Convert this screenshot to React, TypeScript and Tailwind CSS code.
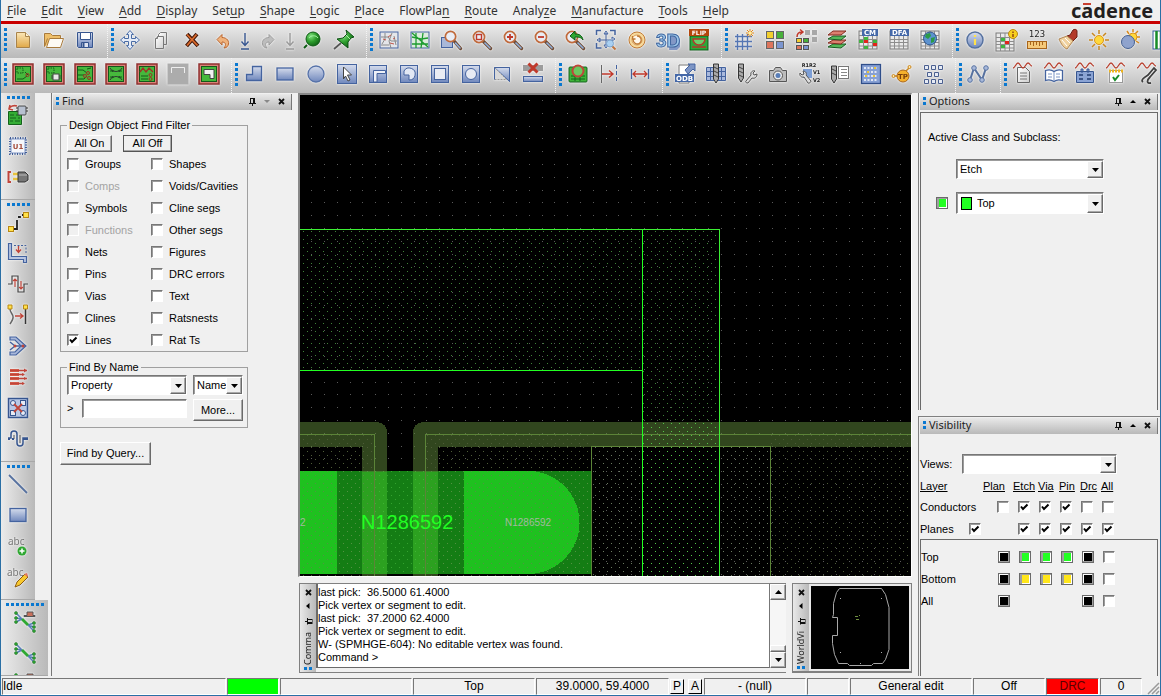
import type { ReactNode } from "react";

const B = "#44639f";
const R = "#b8402f";

/* ---------- shared drawing helpers ---------- */

function Defs() {
  return (
    <svg width="0" height="0" className="absolute" aria-hidden="true">
      <defs>
        <linearGradient id="blue" x1="0" y1="0" x2="0" y2="1">
          <stop offset="0" stopColor="#d5dcec" />
          <stop offset="1" stopColor="#7088bd" />
        </linearGradient>
        <linearGradient id="gold" x1="0" y1="0" x2="0" y2="1">
          <stop offset="0" stopColor="#fbe7b8" />
          <stop offset="1" stopColor="#e0a848" />
        </linearGradient>
        <linearGradient id="paper" x1="0" y1="0" x2="1" y2="1">
          <stop offset="0" stopColor="#ffffff" />
          <stop offset="1" stopColor="#cfcfcf" />
        </linearGradient>
        <radialGradient id="ball" cx="0.35" cy="0.3" r="0.8">
          <stop offset="0" stopColor="#7fe27f" />
          <stop offset="0.5" stopColor="#2c9c2c" />
          <stop offset="1" stopColor="#0b5a12" />
        </radialGradient>
      </defs>
    </svg>
  );
}

function Board({ children }: { children: ReactNode }) {
  return (
    <>
      <rect x="2" y="2" width="20" height="20" fill="#d98277" stroke="#8f2f2f" strokeWidth="1.5" />
      <rect x="4.5" y="4.5" width="15" height="15" fill="#46b83c" stroke="#14581a" />
      <g fill="none" stroke="#145a18" strokeWidth="1">{children}</g>
    </>
  );
}

function Lens({ children }: { children?: ReactNode }) {
  return (
    <>
      <path d="M13.5 13.5l7 7" stroke="#6f4a33" strokeWidth="3.4" strokeLinecap="round" />
      <path d="M15 15l5 5" stroke="#8fb0dc" strokeWidth="1.6" strokeLinecap="round" />
      <circle cx="9" cy="9" r="5.6" fill="#e9edf5" stroke="#c06a3c" strokeWidth="1.7" />
      {children}
    </>
  );
}

function Sheet({ children }: { children?: ReactNode }) {
  return (
    <>
      <rect x="3" y="3" width="18" height="18" fill="#e9e9e9" stroke="#777" />
      <path d="M3 7.500h18M3 11.500h18M3 14.500h18M3 18h18M7.500 3v18M12 3v18M16.500 3v18" stroke="#8c8c8c" fill="none" />
      {children}
    </>
  );
}

const wave = <path d="M2 6c2 0 3-5 5-5s3 5 5 5 3-5 5-5 2 3 4 3" fill="none" stroke={R} strokeWidth="1.3" />;

const ratDots = (
  <g fill="#2fa832" stroke="#14611c" strokeWidth="0.500">
    <circle cx="3" cy="3" r="1.500" /><circle cx="3" cy="8" r="1.500" /><circle cx="3" cy="12" r="1.500" />
    <circle cx="21" cy="13" r="1.500" /><circle cx="21" cy="17" r="1.500" /><circle cx="21" cy="21" r="1.500" />
  </g>
);
const ratLines = (
  <>
    <path d="M3 3l6 6 6 6 6 6M3 8l6 1M3 12l6-3M21 13l-6 2M21 17l-6-2" stroke="#5a7fb8" fill="none" strokeWidth="1.500" />
    <path d="M9 9l6 6" stroke="#2fa832" strokeWidth="2.800" />
  </>
);
const ratHat = <path d="M11 6.500h11v-1h-2V2h-6v3.500h-3z" fill="#c8705c" stroke="#555" />;

const art: Record<string, ReactNode> = {
  "New": (
    <g stroke="#a8834a">
      <path d="M5.500 4.500h9l4 4v11h-13z" fill="url(#gold)" />
      <path d="M14.500 4.500v4h4" fill="#fff3d2" />
    </g>
  ),
  "Open": (
    <g stroke="#a87a3c">
      <path d="M2.500 18.500v-13h6l2 2h8v3" fill="#eebf6a" />
      <path d="M4.500 19.500l3-9h14l-3 9z" fill="#fdfaf3" />
      <path d="M2.500 18.500l3-8" />
    </g>
  ),
  "Save": (
    <g stroke="#36558f">
      <path d="M4.500 4.500h15v15h-14l-1-1z" fill="url(#blue)" />
      <path d="M7.500 4.500h10v7h-10z" fill="#fff" />
      <path d="M8.500 14.500h7v5h-7z" fill="#dfe5f2" />
      <path d="M10.500 15v4" strokeWidth="2" />
    </g>
  ),
  "Move": (
    <path
      d="M12 2.500l3.500 4h-2v4h4v-2l4 3.500-4 3.500v-2h-4v4h2l-3.500 4-3.500-4h2v-4h-4v2l-4-3.500 4-3.500v2h4v-4h-2z"
      fill="#e4ebf7"
      stroke="#4a6ca5"
    />
  ),
  "Copy": (
    <g stroke="#777" fill="url(#paper)">
      <path d="M11.500 4.500h6v12h-8v-10z" />
      <path d="M8.500 8.500h6v12h-8v-10z" />
      <path d="M8.500 8.500v2h-2" />
    </g>
  ),
  "Delete": (
    <>
      <path d="M7 6l11 12M17 6L6.500 18" stroke="#451b0d" strokeWidth="4" />
      <path d="M7 6.500l10.500 11M16.500 6.500L7 17.500" stroke="#dc6a2b" strokeWidth="1.800" />
    </>
  ),
  "Undo": (
    <path d="M6 11.500l5-5v3c5 0 8 4 6 8-1 2-3 2.500-4 2.500 3-4 1-6-2-6v3z" fill="#efb27c" stroke="#b9652f" />
  ),
  "Undo list": (
    <path d="M12 5v12M8.500 13.500l3.500 4 3.500-4M8 21h8" fill="none" stroke="#36558f" strokeWidth="1.400" />
  ),
  "Redo": (
    <path d="M18 11.500l-5-5v3c-5 0-8 4-6 8 1 2 3 2.500 4 2.500-3-4-1-6 2-6v3z" fill="#bdbdbd" stroke="#9c9c9c" />
  ),
  "Redo list": (
    <path d="M12 5v12M8.500 13.500l3.500 4 3.500-4M8 21h8" fill="none" stroke="#999" strokeWidth="1.400" />
  ),
  "Refresh": (
    <>
      <path d="M6 17l-3 3" stroke="#0d5a14" strokeWidth="2" />
      <circle cx="12" cy="11" r="7" fill="url(#ball)" stroke="#0d5a14" />
      <path d="M8 10c2-3 7-3 9 0" fill="none" stroke="#9ff09f" />
    </>
  ),
  "Pin": (
    <g stroke="#0d4f14">
      <path d="M9 15l-7 6" stroke="#555" strokeWidth="1.800" />
      <path d="M14 2l8 7-3 1-3 4 0 6-11-9 6-1 4-4z" fill="url(#ball)" />
      <path d="M14 7l4 4" stroke="#a6f0a0" />
    </g>
  ),
  "Unrats all": (
    <>
      <rect x="3" y="4" width="18" height="16" fill="#e4e6ea" stroke={B} />
      <path d="M4 9h7l3 4h6M8 5v6l-3 5M15 5l-3 8 2 7M4 17h8M17 8l2 9" stroke="#8a8a8a" fill="none" />
      <path d="M6 11l3 1M11 9l3-2M13 15l4 1M16 11l2-1" stroke="#c0564a" />
    </>
  ),
  "Rats all": (
    <>
      <rect x="3" y="4" width="18" height="16" fill="#dcebdc" stroke={B} />
      <path d="M4 9l9 2 7-1M8 5v15M15 5l-2 15M4 16h16M4 5l16 14" stroke="#1d9c2f" strokeWidth="1.300" fill="none" />
    </>
  ),
  "Zoom by points": (
    <>
      <rect x="2.500" y="9.500" width="11" height="10" fill="#a9b8d8" stroke={B} />
      <path d="M15.500 13.500l6 7" stroke="#6f4a33" strokeWidth="3.400" strokeLinecap="round" />
      <path d="M16.500 15l4.500 5" stroke="#8fb0dc" strokeWidth="1.600" strokeLinecap="round" />
      <circle cx="11.500" cy="8.500" r="5.200" fill="#e9edf5" stroke="#c06a3c" strokeWidth="1.700" />
    </>
  ),
  "Zoom fit": (
    <Lens>
      <rect x="6.500" y="6.500" width="5" height="5" fill="none" stroke="#c0392b" strokeWidth="1.400" />
    </Lens>
  ),
  "Zoom in": (
    <Lens>
      <path d="M9 6v6M6 9h6" stroke="#c0392b" strokeWidth="1.800" />
    </Lens>
  ),
  "Zoom out": (
    <Lens>
      <path d="M6 9h6" stroke="#c0392b" strokeWidth="1.800" />
    </Lens>
  ),
  "Zoom previous": (
    <Lens>
      <path d="M7 8l5-5v3c4 0 7 1 8 6-2-3-5-3-8-3v3z" fill="#2fa832" stroke="#0d5a14" />
    </Lens>
  ),
  "Zoom selection": (
    <>
      <path d="M2.500 7v-4.500h4.500M16 2.500h5v4.500M2.500 15v5h5" fill="none" stroke={B} strokeWidth="1.500" />
      <path d="M12 3l2 3h-4zM3 12l3-2v4zM12 20l2-3h-4zM21 11l-3-2v4zM12 5v12M5 12h12" fill="#dfe6f4" stroke={B} />
      <path d="M18 18l3.500 3.500" stroke="#c0733c" strokeWidth="2" />
      <circle cx="16" cy="15.500" r="3.500" fill="#a9d0f2" stroke="#7da4cc" />
    </>
  ),
  "Redraw": (
    <>
      <circle cx="12" cy="12" r="8" fill="#f6d99c" stroke="#c07a35" />
      <circle cx="12" cy="12" r="5" fill="#fff8ec" stroke="#d9a05a" />
      <path d="M12 8a4 4 0 1 1-3.500 2.500M7.500 8v3h3" fill="none" stroke="#c07a35" strokeWidth="1.300" />
    </>
  ),
  "3D view": (
    <>
      <path d="M14 6h6l4 5v8l-3 3h-8z" fill="#8398c6" />
      <text x="0" y="19" fontSize="19" fontFamily="Liberation Sans, sans-serif" fontWeight="700" fill="#9dc6ea" stroke="#41679f" strokeWidth="1">3D</text>
    </>
  ),
  "Flip design": (
    <>
      <rect x="3" y="8" width="18" height="14" fill="#2da83a" stroke="#0e5a19" />
      <path d="M6 11a6 6 0 0 0 12 0zM5 19h14" fill="#6ccf6c" stroke="#b3392c" strokeWidth="1.500" />
      <rect x="2" y="1" width="20" height="7" fill="#b4460b" />
      <text x="12" y="7" fontSize="6" fontFamily="DejaVu Sans, sans-serif" fontWeight="700" fill="#fff" textAnchor="middle">FLIP</text>
    </>
  ),
  "Grid toggle": (
    <>
      <path d="M3 8.500h17M3 13.500h17M3 18.500h17M5.500 6v16M10.500 6v16M15.500 6v16" stroke="#5576b3" strokeWidth="1.400" />
      <path d="M18 1v8M14 5h8M15 2l6 6M21 2l-6 6" stroke="#e08a1a" />
      <circle cx="18" cy="5" r="1.500" fill="#fff3a0" />
    </>
  ),
  "Color": (
    <g stroke="#666">
      <rect x="3.500" y="3.500" width="7" height="7" fill="#f3cf2e" />
      <rect x="13.500" y="3.500" width="7" height="7" fill="#48b03a" />
      <rect x="3.500" y="13.500" width="7" height="7" fill="#dd755c" />
      <rect x="13.500" y="13.500" width="7" height="7" fill="#7b95cf" />
    </g>
  ),
  "Shadow toggle": (
    <>
      <path d="M11 2h5v5h-5zM18 2h5v5h-5zM18 9h5v5h-5z" fill="#a8a8a8" />
      <path d="M3 9c0-4 2-5 5-5M6 1.500l3 2.500-3 2.500" fill="none" stroke="#c0392b" strokeWidth="1.500" />
      <g stroke="#555">
        <rect x="2.500" y="10.500" width="5" height="4" fill="#f3cf2e" />
        <rect x="9.500" y="10.500" width="5" height="4" fill="#48b03a" />
        <rect x="2.500" y="17.500" width="5" height="4" fill="#dd755c" />
        <rect x="9.500" y="17.500" width="5" height="4" fill="#7b95cf" />
      </g>
    </>
  ),
  "Cross section": (
    <g strokeWidth="1">
      <path d="M3 19l5-3h13l-5 4z" fill="#56b85a" stroke="#195c22" />
      <path d="M3 15l5-3h13l-5 4z" fill="#dd8070" stroke="#832a20" />
      <path d="M3 11l5-3h13l-5 4z" fill="#56b85a" stroke="#195c22" />
      <path d="M3 7l5-4h13l-5 4z" fill="#dd8070" stroke="#832a20" />
    </g>
  ),
  "Constraint manager": (
    <Sheet>
      <path d="M8 9h4v3H8zM3 12h4v3H3zM8 18h4v3H8zM17 12h4v3h-4z" fill="#3fb43f" />
      <path d="M8 12h4v3H8zM17 15h4v3h-4z" fill="#e2231a" />
      <rect x="6" y="1" width="16" height="7" fill="#4468a8" />
      <text x="14" y="7" fontSize="7" fontFamily="DejaVu Sans, sans-serif" fontWeight="700" fill="#fff" textAnchor="middle">CM</text>
    </Sheet>
  ),
  "DFA table": (
    <Sheet>
      <rect x="3" y="1" width="19" height="7" fill="#4468a8" />
      <text x="12.500" y="7" fontSize="7" fontFamily="DejaVu Sans, sans-serif" fontWeight="700" fill="#fff" textAnchor="middle">DFA</text>
    </Sheet>
  ),
  "Global settings": (
    <Sheet>
      <circle cx="12" cy="10.500" r="6.500" fill="#5c92cf" stroke="#2c5288" />
      <path d="M8 6l4-1 1 3-3 3-3-2zM13 10l4-1-1 5-3 1z" fill="#2b9a47" />
    </Sheet>
  ),
  "Information": (
    <>
      <circle cx="12" cy="12" r="8" fill="url(#blue)" stroke="#56719f" strokeWidth="1.500" />
      <path d="M12 7v2M12 11v6" stroke="#ffe14a" strokeWidth="2.200" />
    </>
  ),
  "Design report": (
    <>
      <g transform="translate(-1 2)"><Sheet /></g>
      <path d="M7 10h4v3H7zM7 17h4v3H7z" fill="#3fb43f" />
      <path d="M11 13h4v3h-4z" fill="#e2231a" />
      <circle cx="19" cy="6" r="4.500" fill="#f8cf1d" stroke="#b88713" />
      <path d="M19 3.500v1.500M19 6v3" stroke="#8a3d10" strokeWidth="1.400" />
    </>
  ),
  "Measure": (
    <>
      <text x="12" y="9" fontSize="9" fontFamily="DejaVu Sans Mono, monospace" fill="#222" textAnchor="middle">123</text>
      <rect x="2.500" y="13.500" width="19" height="7" fill="#f5c97a" stroke="#a8641a" />
      <path d="M5.500 14v3M8.500 14v4M11.500 14v3M14.500 14v4M17.500 14v3" stroke="#a8641a" />
    </>
  ),
  "Paint": (
    <>
      <path d="M11 8l3-1 3-5c1-1 4-1 4 1v6l-4 4z" fill="#b33a2a" stroke="#6d1f14" />
      <path d="M3 11l8-3 6 5-6 8c-3-1-6-5-8-10z" fill="#f0d2a0" stroke="#b08450" />
      <path d="M6 12l5 6M9 10l5 5" stroke="#fff" />
    </>
  ),
  "Highlight": (
    <>
      <path d="M12 2v4M12 18v4M2 12h4M18 12h4M5 5l3 3M16 16l3 3M19 5l-3 3M8 16l-3 3" stroke="#c88720" strokeWidth="1.500" />
      <circle cx="12" cy="12" r="4.500" fill="#ffd83a" stroke="#d9931c" />
    </>
  ),
  "Dehighlight": (
    <>
      <path d="M15 1v3M22 9h-3M20 3l-3 3M9 3l2 3M21 15l-3-2" stroke="#d98a1c" strokeWidth="1.500" />
      <circle cx="15" cy="9" r="4" fill="#ffd83a" stroke="#d9931c" />
      <circle cx="10" cy="14" r="6.500" fill="#8fa3cd" stroke="#46608f" />
    </>
  ),
  "Waive DRC": (
    <>
      <rect x="4" y="3" width="18" height="18" fill="#fff" stroke="#345d96" />
      <path d="M7.500 3v18M12 3v18M17 3v18" stroke="#178c28" strokeWidth="2.500" />
    </>
  ),

  "General edit": <Board><rect x="6" y="6" width="6" height="5" strokeDasharray="1.500 1" /><path d="M6 17h6l4-3M14 10l3 3" /><circle cx="16.500" cy="13" r="1.500" stroke="#a02f24" /></Board>,
  "Placement edit": <Board><rect x="6" y="6" width="6" height="5" strokeDasharray="1.500 1" /><rect x="11" y="12" width="6" height="6" fill="#e8e8e8" stroke="#444" /><path d="M9 14h2M9 16h2M17 14h2M17 16h2" stroke="#444" /></Board>,
  "Etch edit": <Board><path d="M5 8h5l4 3M5 17h6l3-3M14 7l4-1M5 13h6" /><circle cx="15" cy="11" r="1.500" stroke="#a02f24" /><circle cx="12" cy="14" r="1.500" stroke="#a02f24" /><circle cx="16" cy="16" r="1.500" stroke="#a02f24" /></Board>,
  "Flow planning": <Board><path d="M8 8c3 2 5 2 8 0M8 16c3-2 5-2 8 0M6 6l3 4M18 6l-3 4M6 18l3-4M18 18l-3-4" stroke="#333" /><path d="M6 9h4M14 9h4M6 15h4M14 15h4" /></Board>,
  "Signal integrity": <Board><path d="M5 10l3-4 3 4 3-4 4 4" stroke="#a02f24" strokeWidth="1.300" /><path d="M6 14h7M6 17h7" /><circle cx="15.500" cy="13" r="1.500" stroke="#a02f24" /><circle cx="15.500" cy="17" r="1.500" stroke="#a02f24" /></Board>,
  "IFP edit": (
    <>
      <rect x="1.500" y="1.500" width="21" height="21" fill="#acacac" />
      <path d="M5.500 11V5.500h13v5.500" fill="none" stroke="#eee" />
    </>
  ),
  "Shape edit": <Board><path d="M7 7.500h10v9h-4v-4H7z" fill="#f2f2f2" stroke="#444" /></Board>,

  "Shape polygon": <path d="M4.500 18.500v-6h6v-8h9v14z" fill="url(#blue)" stroke={B} strokeWidth="1.300" />,
  "Shape rectangle": <rect x="4" y="6" width="16" height="12" fill="url(#blue)" stroke={B} strokeWidth="1.300" />,
  "Shape circle": <circle cx="12" cy="12" r="8" fill="url(#blue)" stroke="#5672a8" strokeWidth="1.300" />,
  "Select shape": <><rect x="2.500" y="2.500" width="19" height="19" fill="url(#blue)" stroke={B} /><path d="M8.500 5l8 8h-4l2.500 5-2 1-2.500-5-2 3z" fill="#fff" stroke="#444" /></>,
  "Void polygon": <><rect x="3.500" y="3.500" width="17" height="17" fill="url(#blue)" stroke={B} /><path d="M7.500 20v-11.500h12v3h-8.500v8.500z" fill="#eef1f8" stroke={B} /></>,
  "Void arc": <><rect x="3.500" y="3.500" width="17" height="17" fill="url(#blue)" stroke={B} /><path d="M7 9a6 6 0 1 1 5 9v-5H7z" fill="#e2e8f4" stroke={B} /></>,
  "Void rectangle": <><rect x="3.500" y="3.500" width="17" height="17" fill="url(#blue)" stroke={B} /><rect x="6.500" y="6.500" width="11" height="11" fill="#e8ebf3" stroke={B} /></>,
  "Void circle": <><rect x="3.500" y="3.500" width="17" height="17" fill="url(#blue)" stroke={B} /><circle cx="12" cy="12" r="5.500" fill="#e8ebf3" stroke={B} /></>,
  "Island delete": <><path d="M4.500 5.500h15v14z" fill="url(#blue)" stroke={B} /><path d="M4.500 5.500v12h12z" fill="#d8d8d8" stroke="#999" strokeDasharray="2 1" /><path d="M4.500 17.500v-12h15v14" fill="none" stroke={B} /></>,
  "Delete unconnected": <><rect x="2" y="3" width="20" height="6" fill="#9c9c9c" /><path d="M7.500 1.500l9 9M16.500 1.500l-9 9" stroke="#c0392b" strokeWidth="3" /><rect x="2.500" y="14.500" width="19" height="5" fill="url(#blue)" stroke={B} /></>,

  "Update DRC": <><rect x="3" y="5" width="18" height="15" rx="1" fill="#3fb53a" stroke="#14611c" /><path d="M5 17h14M5 14h14M9 14v5M14 14v5" stroke="#14611c" /><circle cx="12" cy="9" r="5.500" fill="#6cc860" stroke="#c0453a" strokeWidth="2" /></>,
  "Dimension linear": <g fill="none"><path d="M4.500 3v18" stroke="#666" /><path d="M19.500 3v18" stroke={B} strokeDasharray="4 2" /><path d="M5 12h11M12 8.500l4 3.500-4 3.500" stroke="#c0392b" strokeWidth="1.400" /></g>,
  "Dimension datum": <g fill="none"><path d="M3.500 7v10M20.500 7v10" stroke={B} strokeWidth="1.300" /><path d="M5 12h14M8 9l-3 3 3 3M16 9l3 3-3 3" stroke="#c0392b" strokeWidth="1.300" /></g>,

  "ODB export": <><path d="M6 3h10v18H6z" fill="#fff" stroke="#777" /><path d="M12 8l5-5-2-1h7v7l-2-2-5 5z" fill="#7d95c5" stroke={B} /><rect x="2" y="12" width="19" height="8" fill="#4468a8" /><text x="11.500" y="19" fontSize="7" fontFamily="DejaVu Sans, sans-serif" fontWeight="700" fill="#fff" textAnchor="middle">ODB</text></>,
  "NC drill": <><path d="M2.500 5.500h19v13h-19zM2 9.500h20M2 14.500h20M6.500 6v12M17.500 6v12" fill="#a9b9dc" stroke={B} /><path d="M9.500 2h5v15l-2.500 4-2.500-4z" fill="#aaa" stroke="#333" /><path d="M10 5l4 2M10 9l4 2M10 13l4 2" stroke="#444" /></>,
  "NC parameters": <><path d="M3.500 2h5v14l-2.500 4-2.500-4z" fill="#aaa" stroke="#333" /><path d="M4 5l4 2M4 9l4 2M4 13l4 2" stroke="#444" /><path d="M11 19l5-6c-1-3 2-5 4-4l-2 2 1 2 3-1c0 3-2 5-5 4l-4 5c-2 0-3-1-2-2z" fill="#ddd" stroke="#555" /></>,
  "Artwork": <><path d="M3.500 8.500h4l2-3h5l2 3h4v11h-17z" fill="#bcbcbc" stroke="#555" /><circle cx="12" cy="13.500" r="4.500" fill="#eee" stroke="#555" /><circle cx="12" cy="13.500" r="2.500" fill="#5a7fb8" /></>,
  "Backannotate": <><rect x="6" y="7" width="9" height="9" fill="#7d9fd6" /><text x="12" y="5" fontSize="5" fontFamily="DejaVu Sans, sans-serif" fontWeight="700" fill="#222" textAnchor="middle">R1R2</text><text x="16" y="12" fontSize="5" fontFamily="DejaVu Sans, sans-serif" fontWeight="700" fill="#222">V1</text><text x="16" y="20" fontSize="5" fontFamily="DejaVu Sans, sans-serif" fontWeight="700" fill="#222">V2</text><path d="M11 21l-4-6c-3 1-5-2-4-4l2 2 2-1-1-3c3 0 4 3 3 4l5 6c0 1-2 3-3 2z" fill="#ddd" stroke="#555" /></>,
  "Drill legend": <><path d="M3.500 4h5v13l-2.500 4-2.500-4z" fill="#aaa" stroke="#333" /><path d="M4 7l4 2M4 11l4 2" stroke="#444" /><rect x="10.500" y="4.500" width="10" height="12" fill="#fff" stroke="#777" /><path d="M13 7.500h6M13 10.500h6M13 13.500h6" stroke="#888" /></>,
  "Silkscreen": <><rect x="2.500" y="2.500" width="19" height="19" fill="#86a0d4" stroke="#2f4e8a" strokeWidth="1.300" /><path d="M5 6h14M5 10h14M5 14h14M5 18h14" stroke="#dfe6f4" strokeWidth="2" strokeDasharray="2 1.500" /><path d="M8 10h2M14 14h2M6 14h2M15 6h2" stroke="#e8c33c" strokeWidth="2" /></>,
  "Testprep": <><path d="M3 14h7M15 10l4-4" stroke="#c8851c" strokeWidth="1.500" /><circle cx="3.500" cy="14" r="1.500" fill="#ffe9b0" stroke="#c8851c" /><circle cx="19.500" cy="5" r="1.500" fill="#ffe9b0" stroke="#c8851c" /><circle cx="13" cy="14" r="6" fill="#f5b02c" stroke="#a8641a" /><text x="13" y="17" fontSize="7" fontFamily="DejaVu Sans, sans-serif" fontWeight="700" fill="#7a3d0a" textAnchor="middle">TP</text></>,
  "Thieving": <g fill="#e6ebf5" stroke="#4a5f8f"><path d="M3.500 3.500h4v4h-4zM10.500 3.500h4v4h-4zM17.500 3.500h4v4h-4zM6.500 10.500h4v4h-4zM13.500 10.500h4v4h-4zM3.500 17.500h4v4h-4zM10.500 17.500h4v4h-4zM17.500 17.500h4v4h-4z" /></g>,
  "Probe": <g stroke="#56719f" fill="#a8b8da"><path d="M4 18L8 6l8 12 4-12" fill="none" strokeWidth="2" /><circle cx="4" cy="18" r="2.300" /><circle cx="8" cy="6" r="2.300" /><circle cx="16" cy="18" r="2.300" /><circle cx="20" cy="6" r="2.300" /></g>,
  "Signal report": <><path d="M6.500 5.500h8l4 4v11h-12z" fill="url(#paper)" stroke="#666" /><path d="M9 11h7M9 14h7M9 17h7" stroke="#777" />{wave}</>,
  "Signal library": <><path d="M3.500 8.500c3-1 6-1 8.500 1 3-2 6-2 8.500-1v10c-3-1-6-1-8.500 1-3-2-6-2-8.500-1z" fill="#fff" stroke={B} strokeWidth="1.300" /><path d="M12 10v9M6 12h4M6 15h4M14 12h4M14 15h4" stroke="#7d95c5" />{wave}</>,
  "Signal model": <><path d="M3.500 9.500h17v11h-17zM8 7h2v3H8zM14 7h2v3h-2z" fill="#8aa3d4" stroke="#36558f" /><path d="M6 13h4M14 13h4M6 17h4M14 17h4" stroke="#223d70" strokeWidth="1.500" />{wave}</>,
  "Signal audit": <><rect x="5.500" y="8.500" width="13" height="12" fill="#fff" stroke="#999" /><path d="M5 9h14" stroke="#f0b51c" strokeWidth="3" strokeDasharray="2 1" /><path d="M9 15l2 3 4-5" fill="none" stroke="#178c28" strokeWidth="2" />{wave}</>,
  "Signal probe": <>{wave}<path d="M8 20c-3-2 2-5 5-7l6-7 2 2-6 7c-3 3-4 7 1 6" fill="none" stroke="#3f3f3f" strokeWidth="1.800" /></>,

  "Place manual": <><path d="M3 6c1-3 5-4 8-3M4 2l-1 4 4 1" fill="none" stroke="#c0453a" strokeWidth="1.600" /><path d="M2.500 8.500h13v13h-13z" fill="#35ad35" stroke="#14611c" /><path d="M4 12h4M10 12h4M4 15h6M12 15h2M4 18h3M9 18h5" stroke="#14611c" /><rect x="12" y="3" width="8" height="9" rx="1" fill="#b7c0cf" stroke="#444" /><path d="M10 5h2M10 8h2M20 5h2M20 8h2" stroke="#333" /></>,
  "Place component": <><rect x="5" y="5" width="14" height="14" fill="#f5f7fb" stroke="#7f95c5" /><path d="M4 4h16v16H4z" fill="none" stroke="#3e5c97" strokeWidth="2" strokeDasharray="1 1.500" /><text x="12" y="15" fontSize="7" fontFamily="DejaVu Sans, sans-serif" fontWeight="700" fill="#a54f3f" textAnchor="middle">U1</text></>,
  "Swap components": <><path d="M5 7H2.500v10H5" stroke="#c0453a" strokeWidth="2" fill="none" /><path d="M7 9h6M7 14h6" stroke="#e8c33c" strokeWidth="2.500" /><path d="M12 7h7l3 3v5l-3 2h-7z" fill="#777" stroke="#333" /><path d="M13 10h8" stroke="#bbb" /></>,
  "Add connect": <><path d="M7 19h4v-9M12 7h2v-1M16 5h2" fill="none" stroke="#222" strokeWidth="1.800" /><rect x="2.500" y="16.500" width="5" height="5" fill="#ffe14a" stroke="#b88713" /><rect x="17.500" y="2.500" width="5" height="5" fill="#ffe14a" stroke="#b88713" /></>,
  "Slide": <><path d="M2.500 2.500h3v13h15v6h-3v-3h-15z" fill="#b9c6e2" stroke={B} strokeWidth="1.200" /><path d="M8 4.500h12v9" fill="none" stroke={B} strokeDasharray="2 1.500" /><path d="M12.500 5v6M10 8.500l2.500 3 2.500-3" stroke="#c0453a" fill="none" strokeWidth="1.400" /></>,
  "Delay tune": <><path d="M2 12h4V4h6v16h6v-8h4" fill="none" stroke="#444" strokeWidth="1.200" /><path d="M9 15V7M7 9l2-2 2 2M15 9v8M13 15l2 2 2-2" fill="none" stroke="#c0453a" strokeWidth="1.200" /></>,
  "Custom smooth": <><path d="M4 6c0 6 7 5 0 15" fill="none" stroke="#666" strokeWidth="1.500" /><path d="M19.500 6v15" stroke="#333" strokeWidth="1.500" /><path d="M9 13h8M14 10.500l3 2.500-3 2.500" fill="none" stroke="#c0453a" strokeWidth="1.400" /><path d="M2 2h4v4H2zM17.500 2h4v4h-4z" fill="#ffe14a" stroke="#b88713" /></>,
  "Create fanout": <><path d="M4 3h6l10 9-10 9H4v-3h5l6-6-6-6H4z" fill="#a9b8da" stroke={B} strokeWidth="1.200" /><path d="M4 8l5 4M4 16l5-4M8 12h11" stroke={B} strokeWidth="1.500" /><circle cx="9" cy="12" r="1.500" fill="#c0453a" /><circle cx="17" cy="12" r="1.500" fill="#c0453a" /></>,
  "Auto route": <><path d="M4 4h9v3H4zM4 8h9v3H4zM4 12h9v3H4zM4 17h9v3H4z" fill="#d8604e" /><path d="M4 5.500h17M4 9.500h14M4 13.500h17M4 18.500h14" stroke="#c0453a" strokeWidth="1.300" /><path d="M18 3.500l3 2-3 2zM16 8l3 1.500-3 1.500zM18 12l3 1.500-3 1.500zM16 17l3 1.500-3 1.500z" fill="#c0453a" /></>,
  "Spread": <><rect x="2.500" y="2.500" width="19" height="19" fill="#b9c8e6" stroke="#36558f" strokeWidth="1.500" /><g fill="#e6ebf6" stroke="#36558f"><circle cx="7" cy="7" r="2.500" /><rect x="14.500" y="4.500" width="5" height="5" /><rect x="4.500" y="14.500" width="5" height="5" /><circle cx="17" cy="17" r="2.500" /></g><path d="M8 8l8 8M16 8l-8 8" stroke="#c0453a" strokeWidth="1.800" /></>,
  "Phase tune": <><path d="M2 11h3V7c0-4 6-4 6 0v9c0 4 6 4 6 0v-5h5" fill="none" stroke="#36558f" strokeWidth="1.500" /><path d="M8 12V8M14 8v8" fill="none" stroke="#555" /><path d="M2 12h2M6 12h2M17 12h5" stroke="#36558f" strokeWidth="2" /></>,
  "Add line": <path d="M3 3l18 18" stroke="#56719f" strokeWidth="1.800" />,
  "Add rectangle": <rect x="4" y="5.500" width="16" height="13" fill="url(#blue)" stroke={B} strokeWidth="1.300" />,
  "Add text": <><text x="2" y="11" fontSize="10" fontFamily="Noto Sans, sans-serif" fill="#777">abc</text><circle cx="16" cy="17" r="4.500" fill="#2fa832" /><path d="M16 14.500v5M13.500 17h5" stroke="#fff" strokeWidth="1.500" /></>,
  "Edit text": <><text x="1" y="11" fontSize="10" fontFamily="Noto Sans, sans-serif" fill="#777">abc</text><path d="M9 22l2-5 8-8 3 3-8 8z" fill="#f8c92e" stroke="#8a5a14" /><path d="M18 9l3-1 1 3-1 1z" fill="#dd755c" /></>,
  "Rat bundle": <>{ratLines}{ratDots}{ratHat}</>,
  "Rat split": <>{ratLines}{ratDots}</>,
  "Rat merge": <>{ratLines}{ratDots}{ratHat}</>,
};

const rowOne = [
  ["New", "Open", "Save"],
  ["Move", "Copy", "Delete", "Undo", "Undo list", "Redo", "Redo list", "Refresh", "Pin"],
  ["Unrats all", "Rats all", "Zoom by points", "Zoom fit", "Zoom in", "Zoom out", "Zoom previous", "Zoom selection", "Redraw", "3D view", "Flip design"],
  ["Grid toggle", "Color", "Shadow toggle", "Cross section", "Constraint manager", "DFA table", "Global settings"],
  ["Information", "Design report", "Measure", "Paint", "Highlight", "Dehighlight", "Waive DRC"],
];
const rowTwo = [
  ["General edit", "Placement edit", "Etch edit", "Flow planning", "Signal integrity", "IFP edit", "Shape edit"],
  ["Shape polygon", "Shape rectangle", "Shape circle", "Select shape", "Void polygon", "Void arc", "Void rectangle", "Void circle", "Island delete", "Delete unconnected"],
  ["Update DRC", "Dimension linear", "Dimension datum"],
  ["ODB export", "NC drill", "NC parameters", "Artwork", "Backannotate", "Drill legend", "Silkscreen", "Testprep", "Thieving"],
  ["Probe"],
  ["Signal report", "Signal library", "Signal model", "Signal audit", "Signal probe"],
];
const side = [
  ["Place manual", "Place component", "Swap components"],
  ["Add connect", "Slide", "Delay tune", "Custom smooth", "Create fanout", "Auto route", "Spread", "Phase tune"],
  ["Add line", "Add rectangle", "Add text", "Edit text"],
];

function Tool({ name }: { name: string }) {
  const narrow = name.endsWith(" list");
  return (
    <button type="button" aria-label={name} className={`flex h-[31px] shrink-0 items-center justify-center ${narrow ? "w-[14px]" : "w-[31px]"}`}>
      <svg width="24" height="24" viewBox="0 0 24 24" className="shrink-0 overflow-visible drop-shadow-[0_0_1px_#ffffff]" aria-hidden="true">
        {art[name]}
      </svg>
    </button>
  );
}

function Toolbar({ groups, height }: { groups: string[][]; height: string }) {
  return (
    <div role="toolbar" className={`-ml-px flex shrink-0 overflow-hidden bg-linear-to-b from-[#ebebeb] to-[#b9b9b9] pl-px ${height}`}>
      {groups.map((g) => (
        <div key={g[0]} className="flex shrink-0 items-center border-r border-dotted border-[#f4f4f4] pr-[7px] pb-[3px] pl-[3px] last:border-r-0">
          <span className="h-[23px] w-[3px] bg-[repeating-linear-gradient(to_bottom,#0a78d0_0_3px,transparent_3px_5px)]" />
          {g.map((n) => <Tool key={n} name={n} />)}
        </div>
      ))}
    </div>
  );
}

function SideGroup({ names, wide }: { names: string[]; wide?: boolean }) {
  return (
    <div
      role="toolbar"
      className={`flex flex-col items-center border-b border-[#a8a8a8] bg-linear-to-r from-[#ebebeb] to-[#b9b9b9] pt-[3px] ${wide ? "min-h-0 w-[47px] flex-1 overflow-hidden" : "w-[34px] shrink-0 pb-[7px]"}`}
    >
      <span className={`h-[3px] shrink-0 bg-[repeating-linear-gradient(to_right,#0a78d0_0_3px,transparent_3px_5px)] ${wide ? "w-[38px]" : "w-[23px]"}`} />
      {names.map((n) => <Tool key={n} name={n} />)}
    </div>
  );
}

/* ---------- menu bar ---------- */

const menus: [string, string, string][] = [
  ["", "F", "ile"], ["", "E", "dit"], ["", "V", "iew"], ["", "A", "dd"], ["", "D", "isplay"],
  ["Set", "u", "p"], ["", "S", "hape"], ["", "L", "ogic"], ["", "P", "lace"], ["FlowPla", "n", ""],
  ["", "R", "oute"], ["Analy", "z", "e"], ["", "M", "anufacture"], ["", "T", "ools"], ["", "H", "elp"],
];

function MenuBar() {
  return (
    <header className="flex h-6 shrink-0 items-center justify-between border-b-3 border-[#c80000] pr-[6px] pl-[6px]">
      <nav className="flex gap-[15px] font-['Noto_Sans',sans-serif] text-[12px] leading-[18px] text-[#333]">
        {menus.map(([a, u, b]) => (
          <button type="button" key={a + u + b} className="whitespace-nowrap">
            {a}<span className="underline underline-offset-2">{u}</span>{b}
          </button>
        ))}
      </nav>
      <svg width="83" height="20" viewBox="0 0 83 20" role="img" aria-label="cadence" className="shrink-0 overflow-visible">
        <text x="0" y="17" fontSize="20" fontWeight="700" fontFamily="Noto Sans, sans-serif" fill="#231f20">cadence</text>
        <rect x="12" y="2" width="8" height="2" fill="#c8402f" />
      </svg>
    </header>
  );
}

/* ---------- form controls ---------- */

const sunken = "border border-t-[#777] border-l-[#777] border-r-white border-b-white shadow-[inset_1px_1px_0_#9c9c9c]";
const raised = "border border-t-white border-l-white border-r-[#6a6a6a] border-b-[#6a6a6a] shadow-[inset_-1px_-1px_0_#a8a8a8] bg-[#f0f0f0]";

function Box({ label, checked, disabled, text }: { label: string; checked?: boolean; disabled?: boolean; text?: boolean }) {
  return (
    <label className="flex items-center gap-[6px]">
      <span className="grid">
        <input
          type="checkbox"
          aria-label={text ? undefined : label}
          defaultChecked={checked}
          disabled={disabled}
          className={`peer col-start-1 row-start-1 size-3 appearance-none ${sunken} ${disabled ? "bg-[#f0f0f0]" : "bg-white"}`}
        />
        <svg width="12" height="12" viewBox="0 0 12 12" className="pointer-events-none invisible col-start-1 row-start-1 peer-checked:visible" aria-hidden="true">
          <path d="M3 5.500l2 2.500 4.500-4.500" fill="none" stroke="#000" strokeWidth="2" />
        </svg>
      </span>
      {text && <span className={disabled ? "text-[#a3a3a3]" : ""}>{label}</span>}
    </label>
  );
}

function Drop({ label, value, width, height, swatch }: { label: string; value: string; width: string; height: string; swatch?: boolean }) {
  return (
    <div className={`grid ${width} ${height} bg-white ${sunken}`}>
      <select aria-label={label} className={`col-start-1 row-start-1 min-w-0 appearance-none bg-transparent outline-none ${swatch ? "pl-5" : "pl-[3px]"}`}>
        <option>{value}</option>
      </select>
      {swatch && <span className="pointer-events-none col-start-1 row-start-1 ml-1 h-[13px] w-[11px] self-center border border-black bg-[#22ff22]" />}
      <span className={`pointer-events-none col-start-1 row-start-1 mt-px flex w-4 items-center justify-center justify-self-end ${raised}`}>
        <svg width="7" height="4" viewBox="0 0 7 4" aria-hidden="true"><path d="M0 0h7L3.500 4z" /></svg>
      </span>
    </div>
  );
}

function PinMark({ turned }: { turned?: boolean }) {
  return (
    <svg width="7" height="8" viewBox="0 0 7 8" className={turned ? "rotate-90" : ""} shapeRendering="crispEdges" aria-hidden="true">
      <path d="M1 0h4v1H1zM1 0h1v5H1zM4 0h2v5H4zM0 5h7v1H0zM3 6h1v2H3z" fill="#111" />
    </svg>
  );
}
function Cross() {
  return <svg width="7" height="7" viewBox="0 0 7 7" aria-hidden="true"><path d="M1 1l5 5M6 1L1 6" stroke="#111" strokeWidth="1.800" /></svg>;
}

function Caption({ title, down }: { title: string; down?: boolean }) {
  return (
    <div className="flex h-4 shrink-0 items-center border-r border-[#777] bg-linear-to-b from-[#e9e9e9] to-[#b9b9b9] pr-[6px] pb-[2px] pl-[3px]">
      <span className="flex flex-col gap-[2px]">
        <i className="size-[3px] bg-[#0a78d0]" />
        <i className="size-[3px] bg-[#0a78d0]" />
      </span>
      <h2 className="flex-1 pl-[3px] font-['Noto_Sans',sans-serif] text-[11px] leading-[14px] text-[#222]">{title}</h2>
      <div className="flex items-center gap-[8px] pt-px">
        <button type="button" aria-label={`Pin ${title}`}><PinMark /></button>
        <button type="button" aria-label={`Collapse ${title}`}>
          <svg width="6" height="4" viewBox="0 0 6 4" aria-hidden="true">
            {down ? <path d="M0 0h6L3 3z" fill="#888" /> : <path d="M0 3h6L3 0z" />}
          </svg>
        </button>
        <button type="button" aria-label={`Close ${title}`}><Cross /></button>
      </div>
    </div>
  );
}

/* ---------- find panel ---------- */

const filters: [string, string][] = [
  ["Groups", "Shapes"], ["Comps", "Voids/Cavities"], ["Symbols", "Cline segs"], ["Functions", "Other segs"],
  ["Nets", "Figures"], ["Pins", "DRC errors"], ["Vias", "Text"], ["Clines", "Ratsnests"], ["Lines", "Rat Ts"],
];

function FindPanel() {
  return (
    <aside className="flex w-[247px] shrink-0 flex-col border-l border-[#777] pt-px pl-px">
      <div className="pr-[6px]"><Caption title="Find" down /></div>
      <div className="flex flex-col items-start pt-[9px] pl-[7px]">
        <fieldset className="w-[188px] border border-[#a0a0a0] pl-[6px]">
          <legend className="px-[2px] leading-3">Design Object Find Filter</legend>
          <div className="flex gap-[11px] pt-1">
            <button type="button" className={`h-[17px] w-[45px] ${raised}`}>All On</button>
            <button type="button" className={`h-[17px] w-[49px] outline outline-[#555] -outline-offset-1 ${raised}`}>All Off</button>
          </div>
          <div className="grid grid-cols-[84px_auto] pt-px">
            {filters.map(([l, r]) => (
              <div key={l} className="col-span-2 grid h-[22px] grid-cols-subgrid items-center whitespace-nowrap">
                <Box text label={l} checked={l === "Lines"} disabled={l === "Comps" || l === "Functions"} />
                <Box text label={r} />
              </div>
            ))}
          </div>
        </fieldset>
        <fieldset className="mt-[9px] w-[188px] border border-[#a0a0a0] pb-[6px] pl-[6px]">
          <legend className="px-[2px] leading-3">Find By Name</legend>
          <div className="grid grid-cols-[120px_50px] gap-x-[6px] gap-y-1 pt-[2px]">
            <Drop label="Object type" value="Property" width="w-full" height="h-5" />
            <Drop label="Match by" value="Name" width="w-full" height="h-5" />
            <div className="flex items-start">
              <label htmlFor="find-name" className="w-[15px] pt-[3px]">&gt;</label>
              <input id="find-name" type="text" className={`h-[19px] min-w-0 flex-1 bg-white px-1 ${sunken}`} />
            </div>
            <button type="button" className={`h-[22px] ${raised}`}>More...</button>
          </div>
        </fieldset>
        <button type="button" className={`mt-[14px] h-[23px] w-[91px] ${raised}`}>Find by Query...</button>
      </div>
    </aside>
  );
}

/* ---------- board drawing ---------- */

const steps = [0, 13, 26, 39, 51];

function Canvas() {
  return (
    <div className="min-h-0 flex-1 overflow-hidden border-t-2 border-r border-b border-l-2 border-t-[#888] border-r-white border-b-white border-l-[#888] bg-black">
      <svg width="100%" height="100%" className="block" role="img" aria-label="Board layout" shapeRendering="crispEdges">
        <defs>
          <pattern id="grid" x="11" y="120" width="64" height="64" patternUnits="userSpaceOnUse">
            {steps.map((y) => steps.map((x) => <rect key={`${x}-${y}`} x={x} y={y} width="1" height="1" fill="#5a5a5a" />))}
          </pattern>
          <pattern id="dotGreen" x="3" y="136" width="8" height="8" patternUnits="userSpaceOnUse">
            <path d="M0 0h1v1h-1zM4 4h1v1h-1z" fill="#3f8238" />
          </pattern>
          <pattern id="dotBright" x="3" y="136" width="8" height="8" patternUnits="userSpaceOnUse">
            <path d="M0 0h1v1h-1zM4 4h1v1h-1z" fill="#55c84a" />
          </pattern>
          <pattern id="dotGrey" x="7" y="136" width="8" height="8" patternUnits="userSpaceOnUse">
            <path d="M0 0h1v1h-1zM4 4h1v1h-1z" fill="#6a7a60" />
          </pattern>
          <pattern id="dotOlive" x="3" y="136" width="8" height="8" patternUnits="userSpaceOnUse">
            <path d="M0 0h1v1h-1zM4 4h1v1h-1z" fill="#4e5c38" />
          </pattern>
        </defs>

        <rect width="100%" height="100%" fill="url(#grid)" />

        <rect x="0" y="376" width="291" height="104" fill="#147d14" />
        <rect x="0" y="376" width="37" height="103" fill="#1fc11f" />
        <path d="M164 376h64a51.500 51.500 0 0 1 0 103h-64z" fill="#1fc11f" />
        <rect x="0" y="479" width="291" height="4" fill="#000" />

        <g fill="#5c8438" fillOpacity="0.53">
          <path d="M0 327h78q9 2 9 10v146h-25V352H0z" />
          <path d="M1200 327H122q-9 2-9 10v146h25V352H1200z" />
        </g>
        <path d="M62 377h25v102h-25zM113 377h25v102h-25z" fill="#2ca120" />

        <rect x="0" y="339" width="75" height="145" fill="url(#dotOlive)" />
        <rect x="125" y="339" width="166" height="145" fill="url(#dotOlive)" />
        <rect x="291" y="351" width="180" height="140" fill="url(#dotGrey)" />
        <rect x="471" y="339" width="100%" height="145" fill="url(#dotOlive)" />
        <rect x="0" y="134" width="420" height="142" fill="url(#dotGreen)" />
        <rect x="343" y="276" width="77" height="51" fill="url(#dotGreen)" />
        <rect x="343" y="327" width="77" height="24" fill="url(#dotBright)" />
        <rect x="343" y="352" width="77" height="140" fill="#000" />
        <rect x="343" y="352" width="77" height="140" fill="url(#dotBright)" />
        <rect y="376" width="291" height="103" fill="url(#dotBright)" opacity="0.5" />

        <g fill="#5c8438">
          <path d="M0 339h75v1H0zM74 339h1v145h-1zM125 339h1100v1H125zM125 339h1v145h-1z" />
          <path d="M291 351h180v1H291zM291 351h1v133h-1zM470 351h1v133h-1z" />
        </g>
        <path d="M0 134h420v1H0zM419 134h1v350h-1z" fill="#3cf034" />
        <path d="M0 275h343v1H0zM342 134h1v350h-1z" fill="#22ff22" />

        <g fontFamily="Liberation Sans, sans-serif">
          <text x="61" y="434" fontSize="20" fill="#22ff22">N1286592</text>
          <text x="205" y="431" fontSize="10" fill="#a3b8a0">N1286592</text>
          <text x="0" y="431" fontSize="10" fill="#a3b8a0">2</text>
        </g>
      </svg>
    </div>
  );
}

/* ---------- docked windows under the board ---------- */

function SideCaption({ title, short }: { title: string; short: string }) {
  return (
    <div className="flex w-4 shrink-0 flex-col items-center bg-linear-to-r from-[#e9e9e9] to-[#b9b9b9] pt-[5px] pb-[2px]">
      <button type="button" aria-label={`Close ${title}`}><Cross /></button>
      <svg width="4" height="6" viewBox="0 0 4 6" className="mt-[7px] shrink-0" aria-hidden="true"><path d="M3.500 0v6L0 3z" /></svg>
      <span className="mt-2"><PinMark turned /></span>
      <h2 aria-label={title} className="mt-auto shrink-0 rotate-180 font-['Noto_Sans',sans-serif] text-[9px] leading-[14px] text-[#222] [writing-mode:vertical-rl]">{short}</h2>
      <span className="mt-[2px] flex gap-[2px]">
        <i className="size-[3px] bg-[#0a78d0]" />
        <i className="size-[3px] bg-[#0a78d0]" />
      </span>
    </div>
  );
}

const log = `last pick:  36.5000 61.4000
Pick vertex or segment to edit.
last pick:  37.2000 62.4000
Pick vertex or segment to edit.
W- (SPMHGE-604): No editable vertex was found.
Command >`;

function BottomDocks() {
  return (
    <div className="flex h-[99px] shrink-0 gap-[6px] pt-[6px] pb-[3px] pl-px">
      <section className="flex min-w-0 flex-1 border border-r-0 border-[#808080]">
        <SideCaption title="Command" short="Comma" />
        <div className="mb-1 flex min-w-0 flex-1">
          <textarea
            aria-label="Command log"
            defaultValue={log}
            className="min-w-0 flex-1 resize-none overflow-hidden border-l-2 border-b border-[#6a6a6a] bg-white pt-[2px] leading-[13px] outline-none"
          />
          <div className="flex w-[17px] flex-col border-l border-[#777] bg-[#f6f6f6]">
            <button type="button" aria-label="Scroll up" className={`flex h-4 items-center justify-center ${raised}`}>
              <svg width="7" height="4" viewBox="0 0 7 4" aria-hidden="true"><path d="M0 4h7L3.500 0z" /></svg>
            </button>
            <span className="flex-1" />
            <span className={`h-[7px] ${raised}`} />
            <button type="button" aria-label="Scroll down" className={`flex h-4 items-center justify-center ${raised}`}>
              <svg width="7" height="4" viewBox="0 0 7 4" aria-hidden="true"><path d="M0 0h7L3.500 4z" /></svg>
            </button>
          </div>
        </div>
      </section>
      <section className="flex w-[120px] shrink-0 border border-r-2 border-b-2 border-[#808080]">
        <SideCaption title="WorldView" short="WorldVi" />
        <div className="flex-1 border-2 border-[#e8e8e8] bg-black">
          <svg width="98" height="83" viewBox="0 0 98 83" className="block" role="img" aria-label="Board overview">
            <path d="M28.500 2.500h42l4 6 3.500 13v42l-3.500 10-3 4h-9l-2 2h-22l-2-2h-9l-4-9-2-11v-8h5v-18h-5l1-3v-11l3-11z" fill="none" stroke="#a8a8a8" />
            <path d="M29 12h1v1h-1zM70 12h1v1h-1zM29 66h1v1h-1zM70 66h1v1h-1zM49 77h1v1h-1z" fill="#aaa" />
            <path d="M44 30.500h3M48 29.500h1M45 33.500h3" stroke="#6f8f3f" />
          </svg>
        </div>
      </section>
    </div>
  );
}

/* ---------- right panels ---------- */

function Chip({ color, label }: { color: "black" | "green" | "yellow"; label: string }) {
  const fill = { black: "bg-black", green: "bg-[#22ff22]", yellow: "bg-[#ffe61a]" }[color];
  return (
    <button type="button" aria-label={label} className={`block size-3 border border-[#6a6a6a] bg-[#a0a0a0] ${color === "black" ? "pr-px pb-px" : "pt-px pl-[2px]"}`}>
      <span className={`block size-full border-white ${color === "black" ? "border-t border-l" : "border-r border-b"} ${fill}`} />
    </button>
  );
}

const cols = ["Etch", "Via", "Pin", "Drc", "All"];

function Cols() {
  return (
    <colgroup>
      <col className="w-[49px]" />
      <col className="w-[27px]" />
      {[0, 1, 2, 3, 4, 5].map((c) => <col key={c} className="w-[21px]" />)}
    </colgroup>
  );
}

function RightPanels() {
  return (
    <aside className="flex w-[248px] shrink-0 flex-col gap-[6px] pl-[6px]">
      <section className="flex h-[317px] flex-col border-l border-[#808080] pt-px pl-px">
        <div className="pr-[2px]"><Caption title="Options" /></div>
        <div className="mt-[2px] mr-[2px] flex-1 border-t border-r border-l border-[#6a6a6a] pt-[17px] pl-[7px]">
          <p className="leading-[14px]">Active Class and Subclass:</p>
          <div className="mt-[15px] grid grid-cols-[20px_auto] items-center justify-start gap-x-2 gap-y-[13px]">
            <span />
            <Drop label="Active class" value="Etch" width="w-[148px]" height="h-5" />
            <span className="flex justify-end"><Chip color="green" label="Subclass color" /></span>
            <Drop label="Active subclass" value="Top" width="w-[148px]" height="h-[22px]" swatch />
          </div>
        </div>
      </section>
      <section className="flex min-h-0 flex-1 flex-col border-t border-l border-[#808080] pt-px pl-px">
        <div className="pr-[2px]"><Caption title="Visibility" /></div>
        <div className="flex items-center gap-[10px] pt-5 pb-[2px]">
          <span className="w-[32px]">Views:</span>
          <Drop label="Views" value="" width="w-[155px]" height="h-5" />
        </div>
        <table className="w-[202px] shrink-0 table-fixed whitespace-nowrap">
          <Cols />
          <thead>
            <tr className="h-5 underline">
              <th scope="col" className="text-left font-normal">Layer</th>
              <th scope="col" colSpan={2} className="pr-[12px] text-right font-normal">Plan</th>
              {cols.map((c) => (
                <th key={c} scope="col" className="font-normal">
                  <span className={`flex pr-[3px] ${c === "Etch" ? "justify-end" : "justify-start"}`}>{c}</span>
                </th>
              ))}
            </tr>
          </thead>
          <tbody>
            <tr className="h-[22px]">
              <th scope="row" colSpan={2} className="text-left font-normal">Conductors</th>
              <td className="pl-px"><Box label="Conductors Plan" /></td>
              {cols.map((c, i) => <td key={c} className="pl-px"><Box label={`Conductors ${c}`} checked={i < 3} /></td>)}
            </tr>
            <tr className="h-[22px]">
              <th scope="row" className="text-left font-normal">Planes</th>
              <td><Box label="All planes" checked /></td>
              <td />
              {cols.map((c) => <td key={c} className="pl-px"><Box label={`Planes ${c}`} checked /></td>)}
            </tr>
          </tbody>
        </table>
        <div className="-mt-px mr-[2px] min-h-0 flex-1 border-t border-r border-l border-[#6a6a6a] pt-[6px]">
          <table className="w-[202px] table-fixed whitespace-nowrap">
            <Cols />
            <tbody>
              {(["Top", "Bottom", "All"] as const).map((row) => (
                <tr key={row} className="h-[22px]">
                  <th scope="row" colSpan={2} className="text-left font-normal">{row}</th>
                  <td className="pl-px"><Chip color="black" label={`${row} plan`} /></td>
                  {cols.slice(0, 3).map((c) => (
                    <td key={c} className="pl-px">{row !== "All" && <Chip color={row === "Top" ? "green" : "yellow"} label={`${row} ${c}`} />}</td>
                  ))}
                  <td className="pl-px"><Chip color="black" label={`${row} Drc`} /></td>
                  <td className="pl-px"><Box label={`${row} all`} /></td>
                </tr>
              ))}
            </tbody>
          </table>
        </div>
      </section>
    </aside>
  );
}

/* ---------- status bar ---------- */

function Cell({ width, children, tone }: { width: string; children?: ReactNode; tone?: string }) {
  return (
    <div className={`flex h-[17px] items-center justify-center overflow-hidden border border-t-[#777] border-l-[#777] border-r-white border-b-white text-[12px] leading-[15px] ${width} ${tone ?? ""}`}>
      {children}
    </div>
  );
}

function StatusBar() {
  return (
    <footer className="flex h-5 shrink-0 items-center gap-px border-b border-[#2a6fa5] pt-px pl-px whitespace-nowrap">
      <div className="flex h-[17px] min-w-0 flex-1 items-center border border-t-[#777] border-l-[#777] border-r-white border-b-white text-[12px]">Idle</div>
      <Cell width="w-[52px]" tone="bg-[#00ff00]" />
      <Cell width="w-[132px]" />
      <Cell width="w-[122px]">Top</Cell>
      <Cell width="w-[133px]">39.0000, 59.4000</Cell>
      <button type="button" className="mr-[3px] h-[15px] w-[14px] border border-t-white border-l-white border-r-black border-b-black text-[12px] leading-3">P</button>
      <button type="button" className="mr-px h-[15px] w-[14px] border border-t-white border-l-white border-r-black border-b-black text-[12px] leading-3">A</button>
      <Cell width="w-[102px]">- (null)</Cell>
      <Cell width="w-[42px]" />
      <Cell width="w-[122px]">General edit</Cell>
      <Cell width="w-[72px]">Off</Cell>
      <Cell width="w-[53px]" tone="bg-[#ff0000] text-[#5a0000]">DRC</Cell>
      <Cell width="w-[42px]">0</Cell>
      <svg width="17" height="17" viewBox="0 0 17 17" className="shrink-0" aria-hidden="true">
        <path d="M5 16L16 5M9 16l7-7M13 16l3-3" stroke="#999" strokeWidth="1.500" />
      </svg>
    </footer>
  );
}

export default function App() {
  return (
    <div className="flex h-screen flex-col overflow-hidden border-r border-l border-[#2a6fa5] bg-[#f0f0f0] font-['Liberation_Sans',Arial,sans-serif] text-[11px] leading-[13px] text-black">
      <Defs />
      <MenuBar />
      <Toolbar groups={rowOne} height="h-[34px]" />
      <Toolbar groups={rowTwo} height="h-[35px]" />
      <main className="flex min-h-0 flex-1">
        <div className="flex w-[50px] shrink-0 flex-col overflow-hidden">
          {side.map((g) => <SideGroup key={g[0]} names={g} />)}
          <SideGroup names={["Rat bundle", "Rat split", "Rat merge"]} wide />
        </div>
        <FindPanel />
        <div className="flex min-w-0 flex-1 flex-col">
          <Canvas />
          <BottomDocks />
        </div>
        <RightPanels />
      </main>
      <StatusBar />
    </div>
  );
}
